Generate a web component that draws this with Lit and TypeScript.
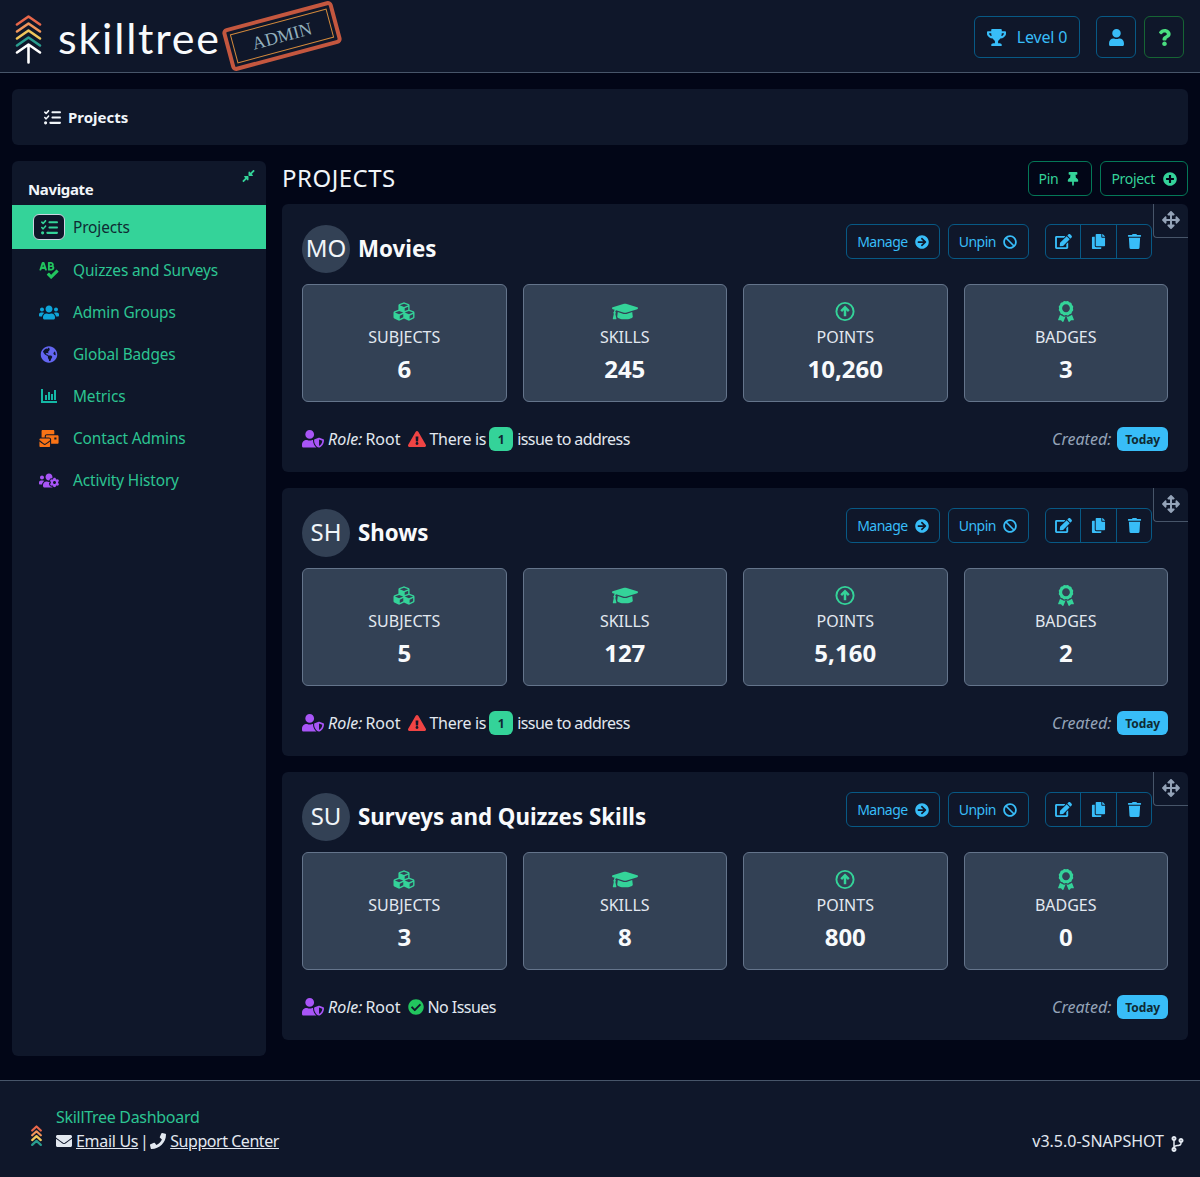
import {css, html, LitElement, svg} from "lit";
import {customElement} from "lit/decorators.js";

const P: Record<string, [number, string]> = {
    trophy: [576, "M552 64H448V24c0-13.3-10.7-24-24-24H152c-13.3 0-24 10.7-24 24v40H24C10.7 64 0 74.7 0 88v56c0 35.7 22.5 72.4 61.9 100.7 31.5 22.7 69.8 37.1 110 41.7C203.3 338.5 240 360 240 360v72h-48c-35.3 0-64 20.7-64 56v12c0 6.6 5.4 12 12 12h296c6.6 0 12-5.4 12-12v-12c0-35.3-28.7-56-64-56h-48v-72s36.7-21.5 68.1-73.6c40.3-4.6 78.6-19 110-41.7 39.3-28.3 61.9-65 61.9-100.7V88c0-13.3-10.7-24-24-24zM99.3 192.8C74.9 175.2 64 155.6 64 144v-16h64.2c1 32.6 5.8 61.2 12.8 86.2-15.1-5.2-29.2-12.4-41.7-21.4zM512 144c0 16.1-17.7 36.1-35.3 48.8-12.5 9-26.7 16.2-41.8 21.4 7-25 11.8-53.6 12.8-86.2H512v16z"],
    user: [448, "M224 256c70.7 0 128-57.3 128-128S294.7 0 224 0 96 57.3 96 128s57.3 128 128 128zm89.6 32h-16.7c-22.2 10.2-46.9 16-72.9 16s-50.6-5.8-72.9-16h-16.7C60.2 288 0 348.2 0 422.4V464c0 26.5 21.5 48 48 48h352c26.5 0 48-21.5 48-48v-41.6c0-74.2-60.2-134.4-134.4-134.4z"],
    question: [384, "M202.021 0C122.202 0 70.503 32.703 29.914 91.026c-7.363 10.58-5.093 25.086 5.178 32.874l43.138 32.709c10.373 7.865 25.132 6.026 33.253-4.148 25.049-31.381 43.63-49.449 82.757-49.449 30.764 0 68.816 19.799 68.816 49.631 0 22.552-18.617 34.134-48.993 51.164-35.423 19.86-82.299 44.576-82.299 106.405V320c0 13.255 10.745 24 24 24h72.471c13.255 0 24-10.745 24-24v-5.773c0-42.86 125.268-44.645 125.268-160.627C377.504 66.256 286.902 0 202.021 0zM192 373.459c-38.196 0-69.271 31.075-69.271 69.271 0 38.195 31.075 69.27 69.271 69.27s69.271-31.075 69.271-69.271-31.075-69.27-69.271-69.27z"],
    thumbtack: [384, "M298.028 214.267L285.793 96H328c13.255 0 24-10.745 24-24V24c0-13.255-10.745-24-24-24H56C42.745 0 32 10.745 32 24v48c0 13.255 10.745 24 24 24h42.207L85.972 214.267C37.465 236.82 0 277.261 0 328c0 13.255 10.745 24 24 24h136v104.007c0 1.242.289 2.467.845 3.578l24 48c2.941 5.882 11.364 5.893 14.311 0l24-48a8.008 8.008 0 0 0 .845-3.578V352h136c13.255 0 24-10.745 24-24-.001-51.183-37.983-91.42-85.973-113.733z"],
    plusCircle: [512, "M256 8C119 8 8 119 8 256s111 248 248 248 248-111 248-248S393 8 256 8zm144 276c0 6.6-5.4 12-12 12h-92v92c0 6.6-5.4 12-12 12h-56c-6.6 0-12-5.4-12-12v-92h-92c-6.6 0-12-5.4-12-12v-56c0-6.6 5.4-12 12-12h92v-92c0-6.6 5.4-12 12-12h56c6.6 0 12 5.4 12 12v92h92c6.6 0 12 5.4 12 12v56z"],
    arrowRight: [512, "M256 8c137 0 248 111 248 248S393 504 256 504 8 393 8 256 119 8 256 8zm-28.9 143.6l75.5 72.4H120c-13.3 0-24 10.7-24 24v16c0 13.3 10.7 24 24 24h182.6l-75.5 72.4c-9.7 9.3-9.9 24.8-.4 34.3l11 10.9c9.4 9.4 24.6 9.4 33.9 0L404.3 273c9.4-9.4 9.4-24.6 0-33.9L271.6 106.3c-9.4-9.4-24.6-9.4-33.9 0l-11 10.9c-9.5 9.6-9.3 25.1.4 34.4z"],
    ban: [512, "M256 8C119.034 8 8 119.033 8 256s111.034 248 248 248 248-111.034 248-248S392.967 8 256 8zm130.108 117.892c65.448 65.448 70 165.481 20.677 235.637L150.47 105.216c70.204-49.356 170.226-44.735 235.638 20.676zM125.892 386.108c-65.448-65.448-70-165.481-20.677-235.637L361.53 406.784c-70.203 49.356-170.226 44.736-235.638-20.676z"],
    edit: [576, "M402.6 83.2l90.2 90.2c3.8 3.8 3.8 10 0 13.8L274.4 405.6l-92.8 10.3c-12.4 1.4-22.9-9.1-21.5-21.5l10.3-92.8L388.8 83.2c3.8-3.8 10-3.8 13.8 0zm162-22.9l-48.8-48.8c-15.2-15.2-39.9-15.2-55.2 0l-35.4 35.4c-3.8 3.8-3.8 10 0 13.8l90.2 90.2c3.8 3.8 10 3.8 13.8 0l35.4-35.4c15.2-15.3 15.2-40 0-55.2zM384 346.2V448H64V128h229.8c3.2 0 6.2-1.3 8.5-3.5l40-40c7.6-7.6 2.2-20.5-8.5-20.5H48C21.5 64 0 85.5 0 112v352c0 26.5 21.5 48 48 48h352c26.5 0 48-21.5 48-48V306.2c0-10.7-12.9-16-20.5-8.5l-40 40c-2.2 2.3-3.5 5.3-3.5 8.5z"],
    copy: [448, "M320 448v40c0 13.255-10.745 24-24 24H24c-13.255 0-24-10.745-24-24V120c0-13.255 10.745-24 24-24h72v296c0 30.879 25.121 56 56 56h168zm0-344V0H152c-13.255 0-24 10.745-24 24v368c0 13.255 10.745 24 24 24h272c13.255 0 24-10.745 24-24V128H344c-13.2 0-24-10.8-24-24zm120.971-31.029L375.029 7.029A24 24 0 0 0 358.059 0H352v96h96v-6.059a24 24 0 0 0-7.029-16.97z"],
    trash: [448, "M432 32H312l-9.4-18.7A24 24 0 0 0 281.1 0H166.8a23.72 23.72 0 0 0-21.4 13.3L136 32H16A16 16 0 0 0 0 48v32a16 16 0 0 0 16 16h416a16 16 0 0 0 16-16V48a16 16 0 0 0-16-16zM53.2 467a48 48 0 0 0 47.9 45h245.8a48 48 0 0 0 47.9-45L416 128H32z"],
    move: [512, "M352.201 425.775l-79.196 79.196c-9.373 9.373-24.568 9.373-33.941 0l-79.196-79.196c-15.119-15.119-4.411-40.971 16.971-40.97h51.162L228 284H127.196v51.162c0 21.382-25.851 32.09-40.971 16.971L7.029 272.937c-9.373-9.373-9.373-24.569 0-33.941L86.225 159.8c15.119-15.119 40.971-4.411 40.971 16.971V228H228V127.196h-51.23c-21.382 0-32.09-25.851-16.971-40.971l79.196-79.196c9.373-9.373 24.568-9.373 33.941 0l79.196 79.196c15.119 15.119 4.411 40.971-16.971 40.971h-51.162V228h100.804v-51.162c0-21.382 25.851-32.09 40.97-16.971l79.196 79.196c9.373 9.373 9.373 24.569 0 33.941L425.773 352.2c-15.119 15.119-40.971 4.411-40.97-16.971V284H284v100.804h51.23c21.382 0 32.09 25.851 16.971 40.971z"],
    warn: [576, "M569.517 440.013C587.975 472.007 564.806 512 527.94 512H48.054c-36.937 0-59.999-40.055-41.577-71.987L246.423 23.985c18.467-32.009 64.72-31.951 83.154 0l239.94 416.028zM288 354c-25.405 0-46 20.595-46 46s20.595 46 46 46 46-20.595 46-46-20.595-46-46-46zm-43.673-165.346l7.418 136c.347 6.364 5.609 11.346 11.982 11.346h48.546c6.373 0 11.635-4.982 11.982-11.346l7.418-136c.375-6.874-5.098-12.654-11.982-12.654h-63.383c-6.884 0-12.356 5.78-11.981 12.654z"],
    check: [512, "M504 256c0 136.967-111.033 248-248 248S8 392.967 8 256 119.033 8 256 8s248 111.033 248 248zM227.314 387.314l184-184c6.248-6.248 6.248-16.379 0-22.627l-22.627-22.627c-6.248-6.249-16.379-6.249-22.628 0L216 308.118l-70.059-70.059c-6.248-6.248-16.379-6.248-22.628 0l-22.627 22.627c-6.248 6.248-6.248 16.379 0 22.627l104 104c6.249 6.249 16.379 6.249 22.628.001z"],
    envelope: [512, "M502.3 190.8c3.9-3.1 9.7-.2 9.7 4.7V400c0 26.5-21.5 48-48 48H48c-26.5 0-48-21.5-48-48V195.6c0-5 5.7-7.8 9.7-4.7 22.4 17.4 52.1 39.5 154.1 113.6 21.1 15.4 56.7 47.8 92.2 47.6 35.7.3 72-32.8 92.3-47.6 102-74.1 131.6-96.3 154-113.7zM256 320c23.2.4 56.6-29.2 73.4-41.4 132.7-96.3 142.8-104.7 173.4-128.7 5.8-4.5 9.2-11.5 9.2-18.9v-19c0-26.5-21.5-48-48-48H48C21.5 64 0 85.5 0 112v19c0 7.4 3.4 14.3 9.2 18.9 30.6 23.9 40.7 32.4 173.4 128.7 16.8 12.2 50.2 41.8 73.4 41.4z"],
    phone: [512, "M493.4 24.6l-104-24c-11.3-2.6-22.9 3.3-27.5 13.9l-48 112c-4.2 9.8-1.4 21.3 6.9 28l60.6 49.6c-36 76.7-98.9 140.5-177.2 177.2l-49.6-60.6c-6.8-8.3-18.2-11.1-28-6.9l-112 48C3.9 366.5-2 378.1.6 389.4l24 104C27.1 504.2 36.7 512 48 512c256.1 0 464-207.5 464-464 0-11.2-7.7-20.9-18.6-23.4z"],
    branch: [384, "M384 144c0-44.2-35.8-80-80-80s-80 35.8-80 80c0 36.4 24.3 67.1 57.5 76.8-.6 16.1-4.2 28.5-11 36.9-15.4 19.2-49.3 22.4-85.2 25.7-28.2 2.6-57.4 5.4-81.3 16.9v-144c32.5-10.2 56-40.5 56-76.3 0-44.2-35.8-80-80-80S0 35.8 0 80c0 35.8 23.5 66.1 56 76.3v199.3C23.5 365.9 0 396.2 0 432c0 44.2 35.8 80 80 80s80-35.8 80-80c0-34-21.2-63.1-51.2-74.6 3.1-5.2 7.8-9.8 14.9-13.4 16.2-8.2 40.4-10.4 66.1-12.8 42.2-3.9 90-8.4 118.2-43.4 14-17.4 21.1-39.8 21.6-67.9 31.6-10.8 54.4-40.7 54.4-75.9zM80 64c8.8 0 16 7.2 16 16s-7.2 16-16 16-16-7.2-16-16 7.2-16 16-16zm0 384c-8.8 0-16-7.2-16-16s7.2-16 16-16 16 7.2 16 16-7.2 16-16 16zm224-320c8.8 0 16 7.2 16 16s-7.2 16-16 16-16-7.2-16-16 7.2-16 16-16z"],
    users: [640, "M96 224c35.3 0 64-28.7 64-64s-28.7-64-64-64-64 28.7-64 64 28.7 64 64 64zm448 0c35.3 0 64-28.7 64-64s-28.7-64-64-64-64 28.7-64 64 28.7 64 64 64zm32 32h-64c-17.6 0-33.5 7.1-45.1 18.6 40.3 22.1 68.9 62 75.1 109.4h66c17.7 0 32-14.3 32-32v-32c0-35.3-28.7-64-64-64zm-256 0c61.9 0 112-50.1 112-112S381.9 32 320 32 208 82.1 208 144s50.1 112 112 112zm76.8 32h-8.3c-20.8 10-43.9 16-68.5 16s-47.6-6-68.5-16h-8.3C179.6 288 128 339.6 128 403.2V432c0 26.5 21.5 48 48 48h288c26.5 0 48-21.5 48-48v-28.8c0-63.6-51.6-115.2-115.2-115.2zm-223.7-13.4C161.5 263.1 145.6 256 128 256H64c-35.3 0-64 28.7-64 64v32c0 17.7 14.3 32 32 32h65.9c6.3-47.4 34.9-87.3 75.2-109.4z"],
    globe: [496, "M248 8C111.03 8 0 119.03 0 256s111.03 248 248 248 248-111.03 248-248S384.97 8 248 8zm82.29 357.6c-3.9 3.88-7.99 7.95-11.31 11.28-2.99 3-5.1 6.7-6.17 10.71-1.51 5.66-2.73 11.38-4.77 16.87l-17.39 46.85c-13.76 3-28 4.69-42.65 4.69v-27.38c1.69-12.62-7.64-36.26-22.63-51.25-6-6-9.37-14.14-9.37-22.63v-32.01c0-11.64-6.27-22.34-16.46-27.97-14.37-7.95-34.81-19.06-48.81-26.11-11.48-5.78-22.1-13.14-31.65-21.75l-.8-.72a114.792 114.792 0 0 1-18.06-20.74c-9.38-13.77-24.66-36.42-34.59-51.14 20.47-45.5 57.36-82.04 103.2-101.89l24.01 12.01C203.48 89.74 216 82.01 216 70.11v-11.3c7.99-1.29 16.12-2.11 24.39-2.42l28.3 28.3c6.25 6.25 6.25 16.38 0 22.63L264 112l-10.34 10.34c-3.12 3.12-3.12 8.19 0 11.31l4.69 4.69c3.12 3.12 3.12 8.19 0 11.31l-8 8a8.008 8.008 0 0 1-5.66 2.34h-8.99c-2.08 0-4.08.81-5.58 2.27l-9.92 9.65a8.008 8.008 0 0 0-1.58 9.31l15.59 31.19c2.66 5.32-1.21 11.58-7.15 11.58h-5.64c-1.93 0-3.79-.7-5.24-1.96l-9.28-8.06a16.017 16.017 0 0 0-15.55-3.1l-31.17 10.39a11.95 11.95 0 0 0-8.17 11.34c0 4.53 2.56 8.66 6.61 10.69l11.08 5.54c9.41 4.71 19.79 7.16 30.31 7.16s22.59 27.29 32 32h66.75c8.49 0 16.62 3.37 22.63 9.37l13.69 13.69a30.503 30.503 0 0 1 8.93 21.57 46.536 46.536 0 0 1-13.72 32.98zM417 274.25c-5.79-1.45-10.84-5-14.15-9.97l-17.98-26.97a23.97 23.97 0 0 1 0-26.62l19.59-29.38c2.32-3.47 5.5-6.29 9.24-8.15l12.98-6.49C440.2 193.59 448 223.87 448 256c0 8.67-.74 17.16-1.82 25.54L417 274.25z"],
    spell: [576, "M272 256h91.36c43.2 0 82-32.2 84.51-75.34a79.82 79.82 0 0 0-25.26-63.07 79.81 79.81 0 0 0 9.06-44.91C427.9 30.57 389.3 0 347 0h-75a16 16 0 0 0-16 16v224a16 16 0 0 0 16 16zm40-200h40a24 24 0 0 1 0 48h-40zm0 96h56a24 24 0 0 1 0 48h-56zM155.12 22.25A32 32 0 0 0 124.64 0H99.36a32 32 0 0 0-30.48 22.25L.59 235.73A16 16 0 0 0 16 256h24.93a16 16 0 0 0 15.42-11.73L68.29 208h87.42l11.94 36.27A16 16 0 0 0 183.07 256h24.93a16 16 0 0 0 15.42-20.27zM89.37 144L112 75.1l22.63 68.9zm482 132.48l-45.21-45.3a15.88 15.88 0 0 0-22.59 0l-151.5 151.46-55.41-55.5a15.88 15.88 0 0 0-22.59 0l-45.3 45.3a16 16 0 0 0 0 22.59l112 112.21a15.89 15.89 0 0 0 22.6 0l208-208.21a16 16 0 0 0-.02-22.55z"],
    mail: [576, "M160 448c-25.6 0-51.2-22.4-64-32-64-44.8-83.2-60.8-96-70.4V480c0 17.67 14.33 32 32 32h256c17.67 0 32-14.33 32-32V345.6c-12.8 9.6-32 25.6-96 70.4-12.8 9.6-38.4 32-64 32zm128-192H32c-17.67 0-32 14.33-32 32v16c25.6 19.2 22.4 19.2 115.2 86.4 9.6 6.4 28.8 25.6 44.8 25.6s35.2-19.2 44.8-22.4c92.8-67.2 89.6-67.2 115.2-86.4V288c0-17.67-14.33-32-32-32zm256-96H224c-17.67 0-32 14.33-32 32v32h96c33.21 0 60.59 25.42 63.71 57.82l.29-.22V416h192c17.67 0 32-14.33 32-32V192c0-17.67-14.33-32-32-32zm-32 128h-64v-64h64v64zm-352-96c0-35.29 28.71-64 64-64h224V32c0-17.67-14.33-32-32-32H96C78.33 0 64 14.33 64 32v192h96v-32z"],
    usersCog: [640, "M610.5 341.3c2.6-14.1 2.6-28.5 0-42.6l25.8-14.9c3-1.7 4.3-5.2 3.3-8.5-6.7-21.5-18.2-41-33.2-57.1-2.3-2.5-6-3.1-9-1.4l-25.8 14.9c-10.9-9.3-23.4-16.5-36.9-21.3v-29.8c0-3.4-2.4-6.4-5.7-7.1-22.3-5-45-4.8-66.2 0-3.3.7-5.7 3.7-5.7 7.1v29.8c-13.5 4.8-26 12-36.9 21.3l-25.8-14.9c-2.9-1.7-6.7-1.1-9 1.4-15 16.1-26.5 35.6-33.2 57.1-1 3.3.4 6.8 3.3 8.5l25.8 14.9c-2.6 14.1-2.6 28.5 0 42.6l-25.8 14.9c-3 1.7-4.3 5.2-3.3 8.5 6.7 21.5 18.2 41 33.2 57.1 2.3 2.5 6 3.1 9 1.4l25.8-14.9c10.9 9.3 23.4 16.5 36.9 21.3v29.8c0 3.4 2.4 6.4 5.7 7.1 22.3 5 45 4.8 66.2 0 3.3-.7 5.7-3.7 5.7-7.1v-29.8c13.5-4.8 26-12 36.9-21.3l25.8 14.9c2.9 1.7 6.7 1.1 9-1.4 15-16.1 26.5-35.6 33.2-57.1 1-3.3-.4-6.8-3.3-8.5l-25.8-14.9zM496 368.5c-26.8 0-48.5-21.8-48.5-48.5s21.8-48.5 48.5-48.5 48.5 21.8 48.5 48.5-21.7 48.5-48.5 48.5zM96 224c35.3 0 64-28.7 64-64s-28.7-64-64-64-64 28.7-64 64 28.7 64 64 64zm224 32c1.9 0 3.7-.5 5.6-.6 8.3-21.7 20.5-42.1 36.3-59.2 7.4-8 17.9-12.6 28.9-12.6 6.9 0 13.7 1.8 19.6 5.3l7.9 4.6c.8-.5 1.6-.9 2.4-1.4 7-14.6 11.2-30.8 11.2-48 0-61.9-50.1-112-112-112S208 82.1 208 144c0 61.9 50.1 112 112 112zm105.2 194.5c-2.3-1.2-4.6-2.6-6.8-3.9-8.2 4.8-15.3 9.8-27.5 9.8-10.9 0-21.4-4.6-28.9-12.6-18.3-19.8-32.3-43.9-40.2-69.6-10.7-34.5 24.9-49.7 25.8-50.3-.1-2.6-.1-5.2 0-7.8l-7.9-4.6c-3.8-2.2-7-5-9.8-8.1-3.3.2-6.5.6-9.8.6-24.6 0-47.6-6-68.5-16h-8.3C179.6 288 128 339.6 128 403.2V432c0 26.5 21.5 48 48 48h255.4c-3.7-6-6.2-12.8-6.2-20.3v-9.2zM173.1 274.6C161.5 263.1 145.6 256 128 256H64c-35.3 0-64 28.7-64 64v32c0 17.7 14.3 32 32 32h65.9c6.3-47.4 34.9-87.3 75.2-109.4z"],
    userShield: [640, "M622.3 271.1l-115.2-45c-4.1-1.6-12.6-3.7-22.2 0l-115.2 45c-10.7 4.2-17.7 14-17.7 24.9 0 111.6 68.7 188.8 132.9 213.9 9.6 3.7 18 1.6 22.2 0C558.4 489.9 640 420.5 640 296c0-10.9-7-20.7-17.7-24.9zM496 462.4V273.3l95.5 37.3c-5.6 87.1-60.4 135.4-95.5 151.8zM224 256c70.7 0 128-57.3 128-128S294.7 0 224 0 96 57.3 96 128s57.3 128 128 128zm96 40c0-2.5.8-4.8 1.1-7.2-2.5-.1-4.9-.8-7.5-.8h-16.7c-22.2 10.2-46.9 16-72.9 16s-50.6-5.8-72.9-16h-16.7C60.2 288 0 348.2 0 422.4V464c0 26.5 21.5 48 48 48h352c6.8 0 13.3-1.5 19.2-4-54-42.9-99.2-116.7-99.2-212z"],
    cubes: [512, "M488.6 250.2L392 214V105.5c0-15-9.3-28.4-23.4-33.7l-100-37.5c-8.1-3.1-17.1-3.1-25.3 0l-100 37.5c-14.1 5.3-23.4 18.7-23.4 33.7V214l-96.6 36.2C9.3 255.5 0 268.9 0 283.9V394c0 13.6 7.7 26.1 19.9 32.2l100 50c10.1 5.1 22.1 5.1 32.2 0l103.9-52 103.9 52c10.1 5.1 22.1 5.1 32.2 0l100-50c12.2-6.1 19.9-18.6 19.9-32.2V283.9c0-15-9.3-28.4-23.4-33.7zM358 214.8l-85 31.9v-68.2l85-37v73.3zM154 104.1l102-38.2 102 38.2v.6l-102 41.4-102-41.4v-.6zm84 291.1l-85 42.5v-79.1l85-38.8v75.4zm0-112l-102 41.4-102-41.4v-.6l102-38.2 102 38.2v.6zm240 112l-85 42.5v-79.1l85-38.8v75.4zm0-112l-102 41.4-102-41.4v-.6l102-38.2 102 38.2v.6z"],
    cap: [640, "M622.34 153.2L343.4 67.5c-15.2-4.67-31.6-4.67-46.79 0L17.66 153.2c-23.54 7.23-23.54 38.36 0 45.59l48.63 14.94c-10.67 13.19-17.23 29.28-17.88 46.9C38.78 266.15 32 276.11 32 288c0 10.78 5.68 19.85 13.86 25.65L20.33 428.53C18.11 438.52 25.71 448 35.94 448h56.11c10.24 0 17.84-9.48 15.62-19.47L82.14 313.65C90.32 307.85 96 298.78 96 288c0-11.57-6.47-21.25-15.66-26.87.76-15.02 8.44-28.3 20.69-36.72L296.6 284.5c9.06 2.78 26.44 6.25 46.79 0l278.95-85.7c23.55-7.24 23.55-38.36 0-45.6zM352.79 315.09c-28.53 8.76-52.84 3.92-65.59 0l-145.02-44.55L128 384c0 35.35 85.96 64 192 64s192-28.65 192-64l-14.18-113.47-145.03 44.56z"],
    award: [384, "M97.12 362.63c-8.69-8.69-4.16-6.24-25.12-11.85-9.51-2.55-17.87-7.45-25.43-13.32L1.2 448.7c-4.39 10.77 3.81 22.47 15.43 22.03l52.69-2.01L105.56 507c8 8.44 22.04 5.81 26.43-4.96l52.05-127.62c-10.84 6.04-22.87 9.58-35.31 9.58-19.5 0-37.82-7.59-51.61-21.37zM382.8 448.7l-45.37-111.24c-7.56 5.88-15.92 10.77-25.43 13.32-21.07 5.64-16.45 3.18-25.12 11.85-13.79 13.78-32.12 21.37-51.62 21.37-12.44 0-24.47-3.55-35.31-9.58L252 502.04c4.39 10.77 18.44 13.4 26.43 4.96l36.25-38.28 52.69 2.01c11.62.44 19.82-11.27 15.43-22.03zM263 340c15.28-15.55 17.03-14.21 38.79-20.14 13.89-3.79 24.75-14.84 28.47-28.98 7.48-28.4 5.54-24.97 25.95-45.75 10.17-10.35 14.14-25.44 10.42-39.58-7.47-28.38-7.48-24.42 0-52.83 3.72-14.14-.25-29.23-10.42-39.58-20.41-20.78-18.47-17.36-25.95-45.75-3.72-14.14-14.58-25.19-28.47-28.98-27.88-7.61-24.52-5.62-44.95-26.41-10.17-10.35-25-14.4-38.89-10.61-27.87 7.6-23.98 7.61-51.9 0-13.89-3.79-28.72.25-38.89 10.61-20.41 20.78-17.05 18.8-44.94 26.41-13.89 3.79-24.75 14.84-28.47 28.98-7.47 28.39-5.54 24.97-25.95 45.75-10.17 10.35-14.15 25.44-10.42 39.58 7.47 28.36 7.48 24.4 0 52.82-3.72 14.14.25 29.23 10.42 39.59 20.41 20.78 18.47 17.35 25.95 45.75 3.72 14.14 14.58 25.19 28.47 28.98C104.6 325.96 106.27 325 121 340c13.23 13.47 33.84 15.88 49.74 5.82a39.676 39.676 0 0 1 42.53 0c15.89 10.06 36.5 7.65 49.73-5.82zM97.66 175.96c0-53.03 42.24-96.02 94.34-96.02s94.34 42.99 94.34 96.02-42.24 96.02-94.34 96.02-94.34-42.99-94.34-96.02z"],
    compress: [448, "M4.686 427.314L104 328l-32.922-31.029C55.958 281.851 66.666 256 88.048 256h112C213.303 256 224 266.745 224 280v112c0 21.382-25.803 32.09-40.922 16.971L152 376l-99.314 99.314c-6.248 6.248-16.379 6.248-22.627 0L4.686 449.941c-6.248-6.248-6.248-16.379 0-22.627zM443.314 84.686L344 184l32.922 31.029c15.12 15.12 4.412 40.971-16.97 40.971h-112C234.697 256 224 245.255 224 232V120c0-21.382 25.803-32.09 40.922-16.971L296 136l99.314-99.314c6.248-6.248 16.379-6.248 22.627 0l25.373 25.373c6.248 6.248 6.248 16.379 0 22.627z"],
    listCheck: [512, "M152.1 38.2c9.9 8.9 10.7 24 1.8 33.9l-72 80c-4.4 4.9-10.6 7.8-17.2 7.9s-12.9-2.4-17.6-7L7 113c-9.3-9.4-9.3-24.6 0-34s24.6-9.4 34 0l22.1 22.1 55.1-61.2c8.9-9.9 24-10.7 33.9-1.8zm0 160c9.9 8.9 10.7 24 1.8 33.9l-72 80c-4.4 4.9-10.6 7.8-17.2 7.9s-12.9-2.4-17.6-7L7 273c-9.3-9.4-9.3-24.6 0-34s24.6-9.4 34 0l22.1 22.1 55.1-61.2c8.9-9.9 24-10.7 33.9-1.8zM224 96c0-17.7 14.3-32 32-32h224c17.7 0 32 14.3 32 32s-14.3 32-32 32H256c-17.7 0-32-14.3-32-32zm0 160c0-17.7 14.3-32 32-32h224c17.7 0 32 14.3 32 32s-14.3 32-32 32H256c-17.7 0-32-14.3-32-32zm-64 160c0-17.7 14.3-32 32-32h288c17.7 0 32 14.3 32 32s-14.3 32-32 32H192c-17.7 0-32-14.3-32-32zM48 368a48 48 0 1 1 0 96 48 48 0 1 1 0-96z"],
};

const icon = (name: string, cls = "") => {
    const [w, d] = P[name];
    return html`<svg class="ic ${cls}" viewBox="0 0 ${w} 512" fill="currentColor"><path d="${d}"></path></svg>`;
};

const COLORS = ["#e8674a", "#f0955a", "#f1c75b", "#2a9d8f"];

const logoMark = () => html`
    <svg class="logo" viewBox="0 0 27 49" fill="none" stroke-width="2.6" stroke-linecap="round" stroke-linejoin="round">
        ${COLORS.map((c, i) => svg`<path stroke=${c} d="M2 ${9.5 + i * 7}L13.5 ${1.5 + i * 7}L25 ${9.5 + i * 7}"></path>`)}
        <path stroke="#fff" d="M2 37.5L13.5 29.5L25 37.5M13.5 30V47.5"></path>
    </svg>`;

const logoSmall = () => html`
    <svg class="logo-small" viewBox="0 0 11 22" fill="none" stroke-width="2.2" stroke-linecap="round" stroke-linejoin="round">
        ${COLORS.map((c, i) => svg`<path stroke=${c} d="M1.2 ${5.5 + i * 4.8}L5.5 ${1.5 + i * 4.8}L9.8 ${5.5 + i * 4.8}"></path>`)}
    </svg>`;

const NAV = [
    ["Quizzes and Surveys", "spell", "c-ab"],
    ["Admin Groups", "users", "c-cyan"],
    ["Global Badges", "globe", "c-indigo"],
    ["Metrics", "", "c-teal"],
    ["Contact Admins", "mail", "c-orange"],
    ["Activity History", "usersCog", "c-purple"],
];

const PROJECTS = [
    {init: "MO", name: "Movies", subjects: "6", skills: "245", points: "10,260", badges: "3", issues: 1},
    {init: "SH", name: "Shows", subjects: "5", skills: "127", points: "5,160", badges: "2", issues: 1},
    {init: "SU", name: "Surveys and Quizzes Skills", subjects: "3", skills: "8", points: "800", badges: "0", issues: 0},
];

@customElement("app-root")
export class AppRoot extends LitElement {
    renderTile(label: string, value: string, ic: unknown) {
        return html`
            <div class="tile">
                <div class="tile-icon">${ic}</div>
                <div class="tile-label">${label}</div>
                <div class="tile-value">${value}</div>
            </div>
        `;
    }

    renderProject(p: typeof PROJECTS[number]) {
        const pointsIcon = html`<svg class="ic t-ic" viewBox="0 0 22 22" fill="none" stroke="currentColor">
            <circle cx="11" cy="11" r="9" stroke-width="2"></circle>
            <path d="M11 16V7M7 10.5L11 6.5L15 10.5" stroke-width="2.6"></path>
        </svg>`;
        return html`
            <section class="card">
                <div class="handle">${icon("move", "i-move")}</div>
                <div class="card-head">
                    <div class="avatar">${p.init}</div>
                    <h2 class="pname">${p.name}</h2>
                    <div class="actions">
                        <span class="btn blue">Manage ${icon("arrowRight", "i-14")}</span>
                        <span class="btn blue">Unpin ${icon("ban", "i-14")}</span>
                        <div class="group">
                            <span class="g-btn">${icon("edit", "i-15")}</span>
                            <span class="g-btn">${icon("copy", "i-15")}</span>
                            <span class="g-btn">${icon("trash", "i-15")}</span>
                        </div>
                    </div>
                </div>
                <div class="tiles">
                    ${this.renderTile("SUBJECTS", p.subjects, icon("cubes", "t-ic"))}
                    ${this.renderTile("SKILLS", p.skills, icon("cap", "t-cap"))}
                    ${this.renderTile("POINTS", p.points, pointsIcon)}
                    ${this.renderTile("BADGES", p.badges, icon("award", "t-ic"))}
                </div>
                <div class="card-foot">
                    ${icon("userShield", "i-role")}
                    <em class="role">Role:</em><span class="root">Root</span>
                    ${p.issues
                        ? html`${icon("warn", "i-warn")}<span class="issue">There is</span><span class="count">1</span><span class="tight">issue to address</span>`
                        : html`${icon("check", "i-ok")}<span class="tight">No Issues</span>`}
                    <span class="created"><em>Created:</em><span class="today">Today</span></span>
                </div>
            </section>
        `;
    }

    render() {
        return html`
            <header class="top">
                ${logoMark()}
                <span class="word">skilltree</span>
                <div class="stamp"><div class="stamp-in">ADMIN</div></div>
                <div class="top-right">
                    <span class="tbtn level">${icon("trophy", "i-trophy")}Level 0</span>
                    <span class="tbtn square">${icon("user", "i-user")}</span>
                    <span class="tbtn square help">${icon("question", "i-user")}</span>
                </div>
            </header>
            <div class="page">
                <div class="crumb">${icon("listCheck", "i-crumb")}<span>Projects</span></div>
                <div class="body">
                    <aside class="side">
                        <div class="side-head">Navigate ${icon("compress", "i-compress")}</div>
                        <div class="nav active">
                            <span class="active-ic">${icon("listCheck", "i-crumb")}</span>
                            <span>Projects</span>
                        </div>
                        ${NAV.map(([label, ic, c]) => html`
                            <div class="nav">
                                <span class="nav-ic ${c}">
                                    ${ic ? icon(ic, "i-nav") : html`<svg class="ic i-metric" viewBox="0 0 16 14" fill="currentColor">
                                        <path d="M0 0h2v12h14v2H0zM4 6h2v5H4zM7 3h2v8H7zM10 5h2v6h-2zM13 1h2v10h-2z"></path>
                                    </svg>`}
                                </span>
                                <span>${label}</span>
                            </div>
                        `)}
                    </aside>
                    <main class="main">
                        <div class="title-row">
                            <h1>PROJECTS</h1>
                            <div class="title-btns">
                                <span class="btn green">Pin ${icon("thumbtack", "i-14")}</span>
                                <span class="btn green">Project ${icon("plusCircle", "i-14")}</span>
                            </div>
                        </div>
                        ${PROJECTS.map((p) => this.renderProject(p))}
                    </main>
                </div>
            </div>
            <footer class="foot">
                ${logoSmall()}
                <div class="foot-text">
                    <div class="foot-name">SkillTree Dashboard</div>
                    <div class="foot-links">
                        ${icon("envelope", "i-foot")}<u>Email Us</u><span class="sep">|</span>${icon("phone", "i-foot")}<u class="support">Support Center</u>
                    </div>
                </div>
                <div class="version">v3.5.0-SNAPSHOT ${icon("branch", "i-branch")}</div>
            </footer>
        `;
    }

    static styles = css`
        :host {
            display: block;
            background: #020617;
            color: #e2e8f0;
            font-family: "Noto Sans", sans-serif;
            font-size: 16px;
            min-height: 1177px;
        }
        * { box-sizing: border-box; }
        .ic { display: block; flex: none; }

        .top {
            position: relative;
            height: 73px;
            display: flex;
            align-items: center;
            padding: 2px 16px 0 15px;
            background: #0f172a;
            border-bottom: 1px solid #475569;
        }
        .logo { width: 27px; height: 49px; margin-top: 5px; flex: none; }
        .word {
            margin-left: 16px;
            font-family: Lato, sans-serif;
            font-size: 43px;
            letter-spacing: 1.8px;
            color: #f8fafc;
            line-height: 1;
        }
        .stamp {
            position: absolute;
            left: 225px;
            top: 14px;
            width: 114px;
            height: 44px;
            transform: rotate(-15deg);
            border: 4px solid #c4573f;
            border-radius: 5px;
            padding: 3px;
        }
        .stamp-in {
            height: 100%;
            border: 1.5px solid #d48a3c;
            display: flex;
            align-items: center;
            justify-content: center;
            font-family: "Liberation Serif", serif;
            font-size: 18px;
            color: #93b0bd;
        }
        .top-right { margin-left: auto; display: flex; align-items: center; }
        .tbtn {
            height: 42px;
            display: flex;
            align-items: center;
            justify-content: center;
            border: 1px solid #075985;
            border-radius: 6px;
            color: #38bdf8;
        }
        .level { width: 106px; gap: 11px; margin-right: 16px; letter-spacing: -0.15px; }
        .square { width: 40px; }
        .help { margin-left: 8px; border-color: #166534; color: #4ade80; }
        .i-trophy { width: 19px; height: 17px; }
        .i-user { width: 15px; height: 17px; }

        .page { padding: 16px 12px 24px; }
        .crumb {
            height: 56px;
            padding: 0 32px;
            display: flex;
            align-items: center;
            gap: 7px;
            background: #0f172a;
            border-radius: 6px;
            font-size: 15px;
            font-weight: 700;
            color: #f1f5f9;
        }
        .i-crumb { width: 17px; height: 17px; }

        .body { display: flex; gap: 16px; margin-top: 16px; }
        .side {
            width: 254px;
            height: 895px;
            flex: none;
            background: #0f172a;
            border-radius: 6px;
            position: relative;
        }
        .side-head {
            height: 44px;
            padding: 18px 16px 0;
            font-size: 15px;
            font-weight: 700;
            color: #f1f5f9;
            line-height: 20px;
            letter-spacing: -0.35px;
        }
        .i-compress {
            position: absolute;
            right: 11px;
            top: 8px;
            width: 13px;
            height: 14px;
            color: #34d399;
        }
        .nav {
            height: 42px;
            display: flex;
            align-items: center;
            padding-left: 61px;
            color: #2cc492;
            font-size: 15.4px;
            letter-spacing: -0.12px;
            position: relative;
        }
        .nav.active {
            height: 44px;
            padding-left: 21px;
            gap: 8px;
            background: #34d399;
            color: #0f2a33;
        }
        .active-ic {
            width: 32px;
            height: 26px;
            display: flex;
            align-items: center;
            justify-content: center;
            background: #0f172a;
            border: 1px solid #cbd5e1;
            border-radius: 6px;
            color: #34d399;
        }
        .nav-ic {
            position: absolute;
            left: 26px;
            width: 22px;
            display: flex;
            justify-content: center;
        }
        .i-nav { width: 20px; height: 17px; }
        .i-metric { width: 16px; height: 14px; }
        .c-ab { color: #22c55e; }
        .c-cyan { color: #0ea5d9; }
        .c-indigo { color: #6366f1; }
        .c-teal { color: #14b8a6; }
        .c-orange { color: #f97316; }
        .c-purple { color: #a855f7; }

        .main { flex: 1; min-width: 0; }
        .title-row { height: 43px; display: flex; justify-content: space-between; }
        h1 { margin: 0; font-size: 24px; font-weight: 400; line-height: 34px; color: #f1f5f9; letter-spacing: 0.5px; }
        .title-btns { display: flex; gap: 8px; height: 35px; }
        .btn {
            height: 35px;
            padding: 0 10px;
            display: inline-flex;
            align-items: center;
            border-radius: 6px;
            font-size: 14px;
            border: 1px solid;
        }
        .btn.green { color: #34d399; border-color: #047857; gap: 8px; letter-spacing: -0.3px; }
        .btn.green:first-child { padding-right: 11px; }
        .btn.blue { color: #38bdf8; border-color: #075985; gap: 7px; letter-spacing: -0.5px; }
        .btn.blue + .btn.blue { padding-right: 11px; }
        .i-14 { width: 14px; height: 14px; }

        .card {
            position: relative;
            height: 268px;
            margin-bottom: 16px;
            padding: 20px;
            background: #0f172a;
            border-radius: 6px;
        }
        .handle {
            position: absolute;
            top: 0;
            right: 0;
            width: 35px;
            height: 34px;
            padding-bottom: 2px;
            display: flex;
            align-items: center;
            justify-content: center;
            border-left: 1px solid #475569;
            border-bottom: 1px solid #475569;
            border-bottom-left-radius: 4px;
            color: #94a3b8;
        }
        .i-move { width: 18px; height: 18px; }
        .card-head { display: flex; height: 60px; align-items: flex-start; }
        .avatar {
            width: 48px;
            height: 48px;
            margin-top: 1px;
            padding-bottom: 3px;
            border-radius: 50%;
            background: #334155;
            display: flex;
            align-items: center;
            justify-content: center;
            font-size: 24px;
            color: #f1f5f9;
        }
        .pname { margin: 1px 0 0 8px; font-size: 22.3px; line-height: 48px; font-weight: 700; color: #f8fafc; }
        .actions { margin-left: auto; margin-right: 16px; display: flex; gap: 8px; }
        .group { display: flex; margin-left: 8px; height: 35px; border: 1px solid #075985; border-radius: 6px; color: #38bdf8; }
        .g-btn { width: 35px; display: flex; align-items: center; justify-content: center; }
        .g-btn:first-child { width: 34px; }
        .g-btn:nth-child(2) { width: 36px; }
        .g-btn + .g-btn { border-left: 1px solid #075985; }
        .i-15 { width: 17px; height: 15px; }

        .tiles { display: grid; grid-template-columns: repeat(4, 1fr); gap: 16px; }
        .tile {
            height: 118px;
            background: #334155;
            border: 1px solid #64748b;
            border-radius: 6px;
            padding-top: 16px;
            text-align: center;
        }
        .tile-icon { height: 22px; display: flex; justify-content: center; color: #34d399; }
        .t-ic { width: 22px; height: 21px; }
        .t-cap { width: 26px; height: 21px; }
        .tile-label { margin-top: 2px; font-size: 16px; line-height: 24px; color: #e2e8f0; }
        .tile-value { margin-top: 4px; font-size: 24px; line-height: 32px; font-weight: 700; color: #f8fafc; }

        .card-foot { margin-top: 24px; display: flex; align-items: center; height: 26px; font-size: 16px; color: #e2e8f0; }
        .i-role { width: 22px; height: 17.6px; color: #a855f7; margin-right: 4px; }
        .role { margin-right: 3px; }
        .root { margin-right: 8px; }
        .i-warn { width: 18px; height: 16px; color: #ef4444; margin-right: 3px; }
        .i-ok { width: 16px; height: 16px; color: #22c55e; margin-right: 3px; }
        .issue { margin-right: 3px; letter-spacing: -0.3px; }
        .tight { letter-spacing: -0.55px; }
        .count {
            width: 24px;
            height: 24px;
            margin-right: 4px;
            border-radius: 6px;
            background: #34d399;
            color: #0f2a33;
            font-size: 12px;
            font-weight: 700;
            display: flex;
            align-items: center;
            justify-content: center;
        }
        .created { margin-left: auto; display: flex; align-items: center; gap: 6px; color: #94a3b8; }
        .today {
            height: 24px;
            padding: 0 8px;
            display: flex;
            align-items: center;
            border-radius: 6px;
            background: #38bdf8;
            color: #0f2a33;
            font-size: 12px;
            font-weight: 700;
            letter-spacing: -0.1px;
        }

        .foot {
            height: 97px;
            display: flex;
            align-items: center;
            padding: 0 16px 0 31px;
            background: #0f172a;
            border-top: 1px solid #475569;
        }
        .logo-small { width: 11px; height: 22px; flex: none; margin-top: 13px; }
        .foot-text { margin-left: 14px; line-height: 24px; letter-spacing: -0.3px; }
        .foot-name { color: #2cc492; }
        .foot-links { display: flex; align-items: center; }
        .foot-links u { margin-left: 4px; }
        .foot-links .support { letter-spacing: -0.45px; }
        .sep { width: 12px; text-align: center; }
        .i-foot { width: 16px; height: 16px; }
        .version { margin-left: auto; display: flex; align-items: center; gap: 7px; margin-top: 24px; }
        .i-branch { width: 13px; height: 16px; margin-top: 6px; }
    `;
}
